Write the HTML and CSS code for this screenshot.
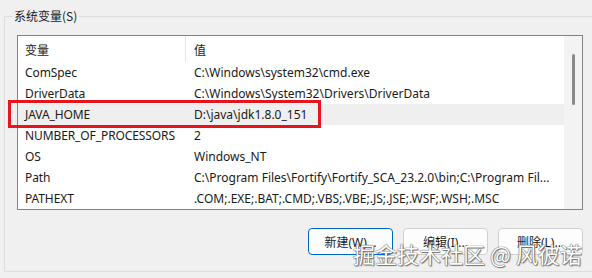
FILE: index.html
```html
<!DOCTYPE html>
<html lang="zh-CN">
<head>
    <meta charset="UTF-8">
    <title>系统变量</title>
    <link rel="stylesheet" href="styles.css">
</head>
<body>
    <fieldset class="group">
        <legend>系统变量(S)</legend>

        <div class="listbox">
            <div class="list">
                <div class="row head">
                    <div class="name">变量</div>
                    <div class="value">值</div>
                </div>
                <div class="row">
                    <div class="name">ComSpec</div>
                    <div class="value">C:\Windows\system32\cmd.exe</div>
                </div>
                <div class="row">
                    <div class="name">DriverData</div>
                    <div class="value">C:\Windows\System32\Drivers\DriverData</div>
                </div>
                <div class="row hover">
                    <div class="name">JAVA_HOME</div>
                    <div class="value">D:\java\jdk1.8.0_151</div>
                    <span class="mark"></span>
                </div>
                <div class="row">
                    <div class="name">NUMBER_OF_PROCESSORS</div>
                    <div class="value">2</div>
                </div>
                <div class="row">
                    <div class="name">OS</div>
                    <div class="value">Windows_NT</div>
                </div>
                <div class="row">
                    <div class="name">Path</div>
                    <div class="value">C:\Program Files\Fortify\Fortify_SCA_23.2.0\bin;C:\Program Fil...</div>
                </div>
                <div class="row">
                    <div class="name">PATHEXT</div>
                    <div class="value">.COM;.EXE;.BAT;.CMD;.VBS;.VBE;.JS;.JSE;.WSF;.WSH;.MSC</div>
                </div>
            </div>
            <div class="scrollbar">
                <div class="thumb"></div>
            </div>
        </div>

        <div class="actions">
            <button class="default">新建(W)...</button>
            <button>编辑(I)...</button>
            <button>删除(L)...</button>
        </div>
    </fieldset>

    <div class="watermark">掘金技术社区 @ 风彼诺</div>
</body>
</html>
```

FILE: styles.css
```css
* {
    box-sizing: border-box;
}

body {
    margin: 0;
    width: 592px;
    height: 278px;
    overflow: hidden;
    position: relative;
    background: #f0f0f0;
    color: #1a1a1a;
    font-family: 'Noto Sans', 'Noto Sans CJK SC', sans-serif;
    font-size: 12px;
}

.group {
    margin: 8px 0 0 4px;
    padding: 11px 12px 16px 12px;
    width: 592px;
    border: 1px solid #dcdcdc;
}

.group legend {
    margin-left: -5px;
    padding: 0 2px;
    line-height: 16px;
    font-family: 'Noto Sans CJK SC', sans-serif;
}

.listbox {
    display: flex;
    width: 566px;
    height: 175px;
    border: 1px solid #828282;
    background: #fff;
}

.list {
    flex: 1;
    display: flex;
    flex-direction: column;
}

.row {
    position: relative;
    display: flex;
    height: 21px;
    align-items: center;
    white-space: nowrap;
}

.row.head {
    height: 26px;
    align-items: stretch;
}

.row.head .name,
.row.head .value {
    display: flex;
    align-items: center;
    font-family: 'Noto Sans CJK SC', sans-serif;
}

.row.head .name {
    border-right: 1px solid #e5e5e5;
}

.row.hover {
    background: #efefef;
}

.name {
    width: 168px;
    padding-left: 7px;
    letter-spacing: -0.1px;
}

.value {
    flex: 1;
    padding-left: 8px;
    overflow: hidden;
}

.mark {
    position: absolute;
    left: -10px;
    top: -4px;
    width: 313px;
    height: 28px;
    border: 3px solid #e8141c;
}

.scrollbar {
    width: 18px;
    display: flex;
    justify-content: center;
    padding-top: 18px;
    background: #f3f3f3;
}

.thumb {
    width: 3px;
    height: 51px;
    border-radius: 2px;
    background: #8a8a8a;
}

.actions {
    display: flex;
    justify-content: flex-end;
    gap: 10px;
    margin-top: 18px;
}

.actions button {
    width: 85px;
    height: 27px;
    padding: 0;
    border: 1px solid #d0d0d0;
    border-radius: 4px;
    background: #fdfdfd;
    color: #1a1a1a;
    font-family: 'Noto Sans', 'Noto Sans CJK SC', sans-serif;
    font-size: 12px;
}

.actions button.default {
    border: 1px solid #0067c0;
}

.watermark {
    position: absolute;
    left: 353px;
    top: 238px;
    font-family: 'Noto Sans CJK SC', sans-serif;
    font-size: 22px;
    line-height: 30px;
    color: #fff;
    text-shadow: 0 0 1px #555, 0 0 1px #555, 1px 1px 1px #777;
}
```
